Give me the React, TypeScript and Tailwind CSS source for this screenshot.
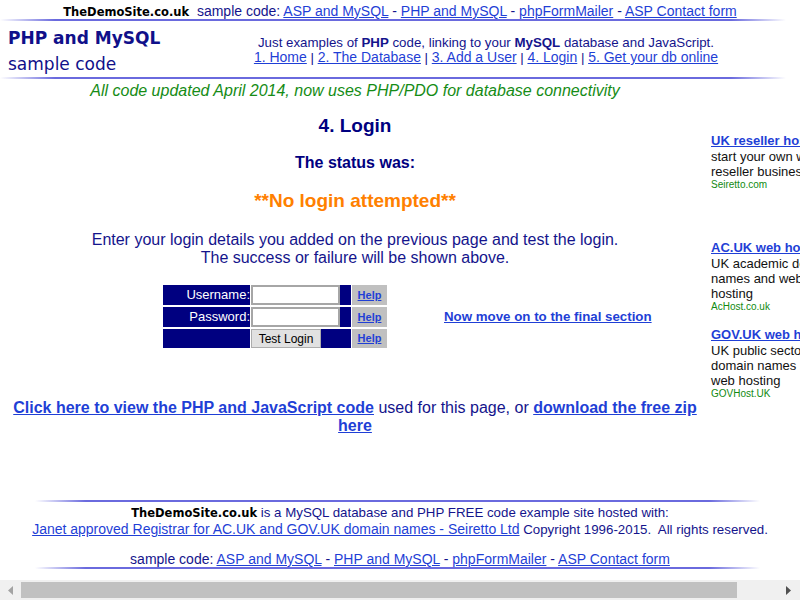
const navy = "text-[#14148c]";

const Hr = ({ className }: { className?: string }) => (
  <div
    className={`h-[2px] bg-[linear-gradient(to_right,rgba(255,255,255,0)_0%,#6a6ade_7%,#6a6ade_93%,rgba(255,255,255,0)_100%)] ${className ?? ""}`}
  />
);

const A = ({ children, bold }: { children: React.ReactNode; bold?: boolean }) => (
  <a href="#" className={`text-[14px] text-[#1f3fd6] underline ${bold ? "text-[16px] font-bold" : ""}`}>
    {children}
  </a>
);

const Brand = () => (
  <span className="font-['DejaVu_Sans',sans-serif] text-[11.5px] font-bold text-black">TheDemoSite.co.uk</span>
);

const SampleLinks = () => (
  <>
    sample code: <A>ASP and MySQL</A> - <A>PHP and MySQL</A> - <A>phpFormMailer</A> - <A>ASP Contact form</A>
  </>
);

const Ad = ({
  title,
  lines,
  url,
  className,
}: {
  title: string;
  lines: string[];
  url: string;
  className?: string;
}) => (
  <div className={className}>
    <a href="#" className="block whitespace-nowrap text-[13px] font-bold leading-[16px] text-[#1f3fd6] underline">
      {title}
    </a>
    {lines.map((l) => (
      <div key={l} className="whitespace-nowrap text-[13px] leading-[15px] text-[#111]">
        {l}
      </div>
    ))}
    <div className="text-[10px] leading-[12px] text-[#118a11]">{url}</div>
  </div>
);

const FormRow = ({ label, children }: { label?: string; children: React.ReactNode }) => (
  <div className="flex gap-[1px]">
    <div className="flex w-[87px] items-center justify-end bg-[#000080] text-[13px] text-white">{label}</div>
    <div className="flex w-[100px] items-center bg-[#000080]">{children}</div>
    <div className="flex w-[35px] items-center justify-center bg-[#c0c0c0]">
      <a href="#" className="text-[11px] font-bold text-[#1f3fd6] underline">
        Help
      </a>
    </div>
  </div>
);

export default function App() {
  return (
    <div className={`flex h-[600px] w-[800px] flex-col overflow-hidden bg-white font-['Liberation_Sans',Arial,sans-serif] ${navy}`}>
      {/* top strip */}
      <div className="h-[19px] whitespace-nowrap pt-[3px] text-center text-[14px] leading-[16px]">
        <Brand />
        &nbsp; <SampleLinks />
      </div>
      <Hr className="w-[786px]" />

      {/* header */}
      <div className="flex h-[56px]">
        <div className="w-[172px] shrink-0 whitespace-nowrap pl-[8px] font-['DejaVu_Sans',sans-serif] text-[#10108a]">
          <div className="mt-[5px] text-[17px] font-bold leading-[24px]">PHP and MySQL</div>
          <div className="mt-[2px] text-[17px] leading-[24px]">sample code</div>
        </div>
        <div className="flex-1 whitespace-nowrap pt-[15px] text-center text-[13.3px] leading-[14px]">
          <div>
            Just examples of <b>PHP</b> code, linking to your <b>MySQL</b> database and JavaScript.
          </div>
          <div>
            <A>1. Home</A> | <A>2. The Database</A> | <A>3. Add a User</A> | <A>4. Login</A> |{" "}
            <A>5. Get your db online</A>
          </div>
        </div>
      </div>
      <Hr className="w-[786px]" />

      {/* main */}
      <div className="flex">
        <div className="w-[710px] shrink-0 text-center">
          <p className="mt-[3px] text-[16px] italic leading-[18px] text-[#168c16]">
            All code updated April 2014, now uses PHP/PDO for database connectivity
          </p>
          <h1 className="mt-[16px] text-[19px] font-bold leading-[20px] text-[#000080]">4. Login</h1>
          <h2 className="mt-[18px] text-[16px] font-bold leading-[18px] text-[#000080]">The status was:</h2>
          <p className="mt-[18px] text-[19px] font-bold leading-[22px] text-[#ff8000]">**No login attempted**</p>
          <p className="mt-[19px] text-[16px] leading-[18px]">
            Enter your login details you added on the previous page and test the login.
            <br />
            The success or failure will be shown above.
          </p>

          <div className="mt-[18px] flex items-center pl-[163px] text-left">
            <div className="flex flex-col gap-[2px]">
              <FormRow label="Username:">
                <input className="h-[20px] w-[89px] border-2 border-[#a6a6a6] bg-white" />
              </FormRow>
              <FormRow label="Password:">
                <input type="password" className="h-[20px] w-[89px] border-2 border-[#a6a6a6] bg-white" />
              </FormRow>
              <FormRow>
                <button className="h-[19px] w-[70px] border border-[#adadad] bg-[#e1e1e1] text-[12px] leading-[16px] text-black">
                  Test Login
                </button>
              </FormRow>
            </div>
            <a href="#" className="ml-[57px] text-[13.3px] font-bold text-[#1f3fd6] underline">
              Now move on to the final section
            </a>
          </div>

          <p className="mx-auto mt-[51px] w-[700px] text-[16px] leading-[18px]">
            <A bold>Click here to view the PHP and JavaScript code</A> used for this page, or{" "}
            <A bold>download the free zip here</A>
          </p>
        </div>

        <div className="ml-[1px] w-[120px] shrink-0 pt-[54px]">
          <Ad title="UK reseller hosting" lines={["start your own web", "reseller business"]} url="Seiretto.com" />
          <Ad
            className="mt-[49px]"
            title="AC.UK web hosting"
            lines={["UK academic domain", "names and web", "hosting"]}
            url="AcHost.co.uk"
          />
          <Ad
            className="mt-[14px]"
            title="GOV.UK web hosting"
            lines={["UK public sector", "domain names and", "web hosting"]}
            url="GOVHost.UK"
          />
        </div>
      </div>

      {/* footer */}
      <div className="mt-[65px] flex flex-col items-center text-[13.3px] leading-[16px]">
        <Hr className="ml-[-5px] w-[725px]" />
        <div className="mt-[3px] whitespace-nowrap">
          <Brand /> is a MySQL database and PHP FREE code example site hosted with:
        </div>
        <div className="whitespace-nowrap">
          <A>Janet approved Registrar for AC.UK and GOV.UK domain names - Seiretto Ltd</A> Copyright 1996-2015.&nbsp; All
          rights reserved.
        </div>
        <div className="mt-[13px] whitespace-nowrap text-[14px]">
          <SampleLinks />
        </div>
        <Hr className="ml-[-5px] w-[725px]" />
      </div>

      {/* horizontal scrollbar */}
      <div className="mt-auto flex h-[20px] items-center bg-[#f0f0f0]">
        <div className="flex w-[21px] justify-center">
          <svg width="5" height="9" viewBox="0 0 5 9">
            <path d="M5 0 L0 4.5 L5 9 Z" fill="#a3a3a3" />
          </svg>
        </div>
        <div className="h-[16px] w-[716px] bg-[#c1c1c1]" />
        <div className="flex flex-1 justify-end pr-[9px]">
          <svg width="5" height="9" viewBox="0 0 5 9">
            <path d="M0 0 L5 4.5 L0 9 Z" fill="#505050" />
          </svg>
        </div>
      </div>
    </div>
  );
}
